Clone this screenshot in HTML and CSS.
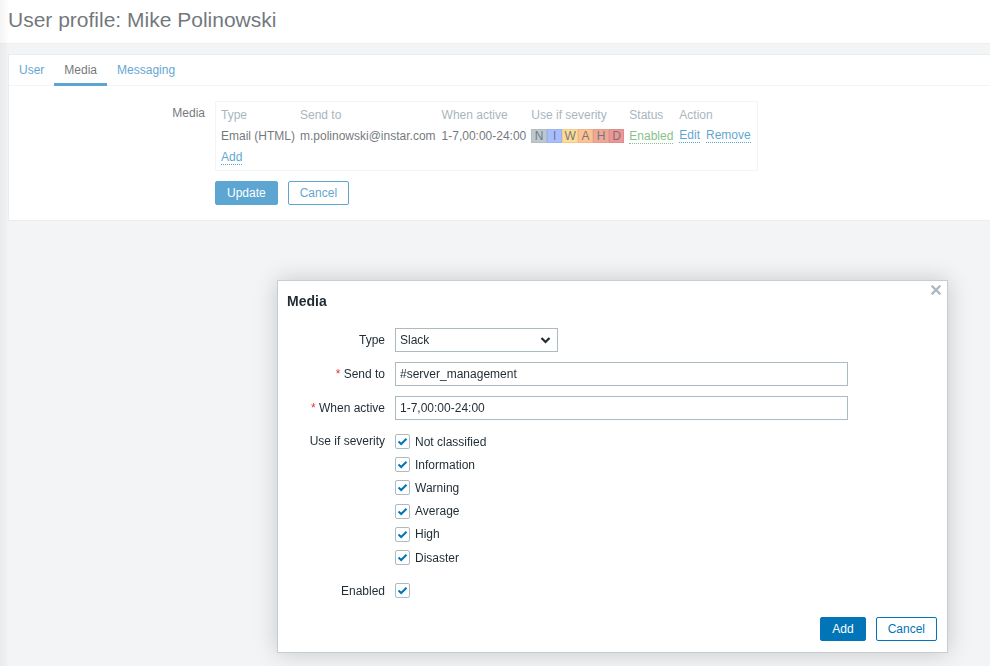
FILE: index.html
```html
<!DOCTYPE html>
<html lang="en">
<head>
<meta charset="utf-8">
<title>User profile: Mike Polinowski</title>
<link rel="stylesheet" href="styles.css">
</head>
<body>
<header class="page-header">
  <h1 class="page-title">User profile: Mike Polinowski</h1>
</header>
<main class="content">
  <section class="card">
    <ul class="tabs">
      <li class="tab"><a href="#">User</a></li>
      <li class="tab tab-active"><a href="#">Media</a></li>
      <li class="tab"><a href="#">Messaging</a></li>
    </ul>
    <div class="tab-body">
      <div class="form-row">
        <div class="form-label">Media</div>
        <div class="form-field">
          <div class="media-box">
            <table class="media-table">
              <thead>
                <tr><th>Type</th><th>Send to</th><th>When active</th><th>Use if severity</th><th>Status</th><th>Action</th></tr>
              </thead>
              <tbody>
                <tr>
                  <td>Email (HTML)</td>
                  <td>m.polinowski@instar.com</td>
                  <td>1-7,00:00-24:00</td>
                  <td>
                    <div class="sev-list">
                      <span class="sev sev-n">N</span><span class="sev sev-i">I</span><span class="sev sev-w">W</span><span class="sev sev-a">A</span><span class="sev sev-h">H</span><span class="sev sev-d">D</span>
                    </div>
                  </td>
                  <td><a href="#" class="link link-green">Enabled</a></td>
                  <td><div class="actions"><a href="#" class="link">Edit</a><a href="#" class="link">Remove</a></div></td>
                </tr>
                <tr><td colspan="6"><a href="#" class="link">Add</a></td></tr>
              </tbody>
            </table>
          </div>
        </div>
      </div>
      <div class="form-row form-actions">
        <div class="form-label"></div>
        <div class="form-field buttons">
          <button class="btn btn-primary">Update</button>
          <button class="btn btn-alt">Cancel</button>
        </div>
      </div>
    </div>
  </section>
</main>

<div class="overlay-bg"></div>

<div class="dialog">
  <div class="dialog-head">
    <h4 class="dialog-title">Media</h4>
    <button class="dialog-close" aria-label="Close">
      <svg width="10" height="10" viewBox="0 0 10 10"><path d="M1.5 1.5 L8.5 8.5 M8.5 1.5 L1.5 8.5" stroke="#acbbc2" stroke-width="2.4" stroke-linecap="square"/></svg>
    </button>
  </div>
  <div class="dialog-body">
    <div class="dform">
      <div class="dlabel">Type</div>
      <div class="dfield">
        <div class="select">
          <span>Slack</span>
          <svg width="11" height="8" viewBox="0 0 11 8"><path d="M1.5 2 L5.5 6 L9.5 2" fill="none" stroke="#1f2c33" stroke-width="2.2"/></svg>
        </div>
      </div>

      <div class="dlabel"><span class="req">*</span> Send to</div>
      <div class="dfield"><div class="input">#server_management</div></div>

      <div class="dlabel"><span class="req">*</span> When active</div>
      <div class="dfield"><div class="input">1-7,00:00-24:00</div></div>

      <div class="dlabel dlabel-top">Use if severity</div>
      <div class="dfield">
        <ul class="check-list">
          <li class="check"><span class="cbox"><svg width="13" height="13" viewBox="0 0 13 13"><path d="M2.5 6.5 L5.2 9 L10.5 3.8" fill="none" stroke="#0275b8" stroke-width="2"/></svg></span>Not classified</li>
          <li class="check"><span class="cbox"><svg width="13" height="13" viewBox="0 0 13 13"><path d="M2.5 6.5 L5.2 9 L10.5 3.8" fill="none" stroke="#0275b8" stroke-width="2"/></svg></span>Information</li>
          <li class="check"><span class="cbox"><svg width="13" height="13" viewBox="0 0 13 13"><path d="M2.5 6.5 L5.2 9 L10.5 3.8" fill="none" stroke="#0275b8" stroke-width="2"/></svg></span>Warning</li>
          <li class="check"><span class="cbox"><svg width="13" height="13" viewBox="0 0 13 13"><path d="M2.5 6.5 L5.2 9 L10.5 3.8" fill="none" stroke="#0275b8" stroke-width="2"/></svg></span>Average</li>
          <li class="check"><span class="cbox"><svg width="13" height="13" viewBox="0 0 13 13"><path d="M2.5 6.5 L5.2 9 L10.5 3.8" fill="none" stroke="#0275b8" stroke-width="2"/></svg></span>High</li>
          <li class="check"><span class="cbox"><svg width="13" height="13" viewBox="0 0 13 13"><path d="M2.5 6.5 L5.2 9 L10.5 3.8" fill="none" stroke="#0275b8" stroke-width="2"/></svg></span>Disaster</li>
        </ul>
      </div>

      <div class="dlabel">Enabled</div>
      <div class="dfield">
        <div class="check"><span class="cbox"><svg width="13" height="13" viewBox="0 0 13 13"><path d="M2.5 6.5 L5.2 9 L10.5 3.8" fill="none" stroke="#0275b8" stroke-width="2"/></svg></span></div>
      </div>
    </div>
  </div>
  <div class="dialog-foot">
    <button class="btn btn-primary">Add</button>
    <button class="btn btn-alt">Cancel</button>
  </div>
</div>
</body>
</html>
```

FILE: styles.css
```css
* { box-sizing: border-box; }

html, body {
  margin: 0;
  padding: 0;
  height: 100%;
}

body {
  background: #ebeef0;
  font-family: "Liberation Sans", Arial, sans-serif;
  font-size: 12px;
  line-height: 14px;
  color: #1f2c33;
  overflow: hidden;
  position: relative;
}

body::before {
  content: "";
  position: fixed;
  left: 0;
  top: 0;
  bottom: 0;
  width: 10px;
  background: linear-gradient(to right, rgba(0, 0, 0, 0.07), rgba(0, 0, 0, 0));
  z-index: 5;
}

a { text-decoration: none; color: #0275b8; }

.page-header {
  background: #fff;
  height: 44px;
  border-bottom: 1px solid #e3e7ea;
  padding: 8px 0 0 8px;
}

.page-title {
  margin: 0;
  font-size: 21px;
  line-height: 24px;
  font-weight: normal;
  color: #1f2c33;
}

.content {
  padding: 10px 0 0 8px;
}

.card {
  background: #fff;
  border: 1px solid #dfe4e7;
  border-right: none;
  margin-right: -10px;
}

.tabs {
  list-style: none;
  margin: 0;
  padding: 0;
  display: flex;
  border-bottom: 1px solid #ebeef0;
}

.tab {
  padding: 8px 10px 6px;
  border-bottom: 3px solid transparent;
  margin-bottom: -1px;
}

.tab a { color: #0275b8; }

.tab-active { border-bottom-color: #0275b8; }
.tab-active a { color: #1f2c33; }

.tab-body {
  padding: 15px 0 15px 0;
}

.form-row {
  display: grid;
  grid-template-columns: 196px auto;
  column-gap: 10px;
}

.form-label {
  text-align: right;
  padding-top: 5px;
}

.form-field { display: flex; }

.media-box {
  border: 1px solid #ebeef0;
  padding: 2px 6px 2px 5px;
}

.media-table {
  border-collapse: collapse;
  border-spacing: 0;
}

.media-table th,
.media-table td {
  padding: 3px 5px 4px 0;
  text-align: left;
  white-space: nowrap;
  vertical-align: middle;
  height: 21px;
}

.media-table th {
  padding-top: 4px;
  padding-bottom: 3px;
}

.media-table th:nth-child(3),
.media-table td:nth-child(3),
.media-table th:nth-child(6),
.media-table td:nth-child(6) { padding-left: 1px; }

.media-table th:last-child,
.media-table td:last-child { padding-right: 0; }

.media-table th {
  font-weight: normal;
  color: #768d99;
}

.sev-list { display: flex; }

.sev {
  width: 15.5px;
  height: 14px;
  line-height: 14px;
  text-align: center;
  color: #1f2c33;
  box-shadow: inset 0 0 0 1px rgba(0, 0, 0, 0.1);
}

.sev-n { background: #97aab3; }
.sev-i { background: #7499ff; }
.sev-w { background: #ffc859; }
.sev-a { background: #ffa059; }
.sev-h { background: #e97659; }
.sev-d { background: #e45959; }

.link {
  color: #0275b8;
  border-bottom: 1px dotted #0275b8;
}

.link-green {
  color: #429e47;
  border-bottom-color: #429e47;
}

.actions {
  display: flex;
  gap: 6px;
}

.form-actions { margin-top: 10px; }

.buttons { gap: 10px; }

.btn {
  font-family: "Liberation Sans", Arial, sans-serif;
  font-size: 12px;
  height: 24px;
  padding: 0 11px;
  border-radius: 2px;
  border: 1px solid #0275b8;
  cursor: pointer;
}

.btn-primary {
  background: #0275b8;
  color: #fff;
}

.btn-alt {
  background: #fff;
  color: #0275b8;
}

/* overlay that dims the page behind the dialog */
.overlay-bg {
  position: fixed;
  inset: 0;
  background: rgba(255, 255, 255, 0.36);
  z-index: 10;
}

.dialog {
  position: absolute;
  left: 277px;
  top: 280px;
  width: 671px;
  height: 373px;
  background: #fff;
  border: 1px solid #c5cdd2;
  box-shadow: 0 0 22px rgba(0, 0, 0, 0.18);
  z-index: 20;
  display: flex;
  flex-direction: column;
}

.dialog-head {
  padding: 12px 10px 0 9px;
  height: 47px;
}

.dialog-title {
  margin: 0;
  font-size: 14px;
  line-height: 16px;
  font-weight: bold;
  color: #1f2c33;
}

.dialog-close {
  position: absolute;
  right: 3px;
  top: 1px;
  width: 16px;
  height: 16px;
  padding: 0;
  border: none;
  background: none;
  display: flex;
  align-items: center;
  justify-content: center;
}

.dialog-body {
  padding: 0 10px 0 9px;
}

.dform {
  display: grid;
  grid-template-columns: 98px 1fr;
  column-gap: 10px;
  row-gap: 10px;
  align-items: center;
}

.dlabel {
  text-align: right;
  white-space: nowrap;
}

.dlabel-top {
  align-self: start;
  line-height: 23px;
}

.req { color: #e33734; }

.dfield { display: flex; }

.select {
  width: 163px;
  height: 24px;
  border: 1px solid #acbbc2;
  padding: 0 6px 0 4px;
  display: flex;
  align-items: center;
  justify-content: space-between;
}

.input {
  width: 453px;
  height: 24px;
  border: 1px solid #acbbc2;
  padding: 0 4px;
  display: flex;
  align-items: center;
}

.check-list {
  list-style: none;
  margin: 0;
  padding: 0;
}

.check {
  display: flex;
  align-items: center;
  gap: 5px;
  height: 23.2px;
}

.cbox {
  width: 15px;
  height: 15px;
  border: 1px solid #acbbc2;
  border-radius: 2px;
  display: flex;
  align-items: center;
  justify-content: center;
}

.dialog-foot {
  margin-top: auto;
  display: flex;
  justify-content: flex-end;
  gap: 10px;
  padding: 0 10px 11px;
}
```
